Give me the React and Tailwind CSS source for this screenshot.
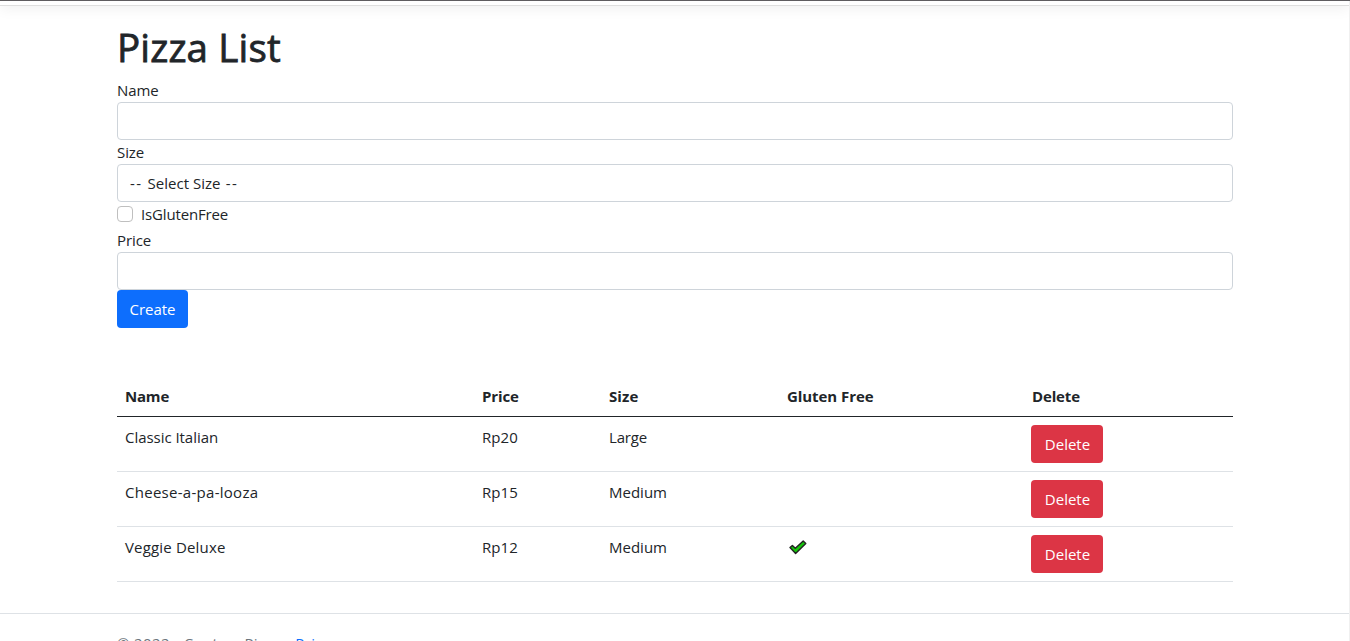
const pizzas = [
  { name: "Classic Italian", price: "Rp20", size: "Large", glutenFree: false, nameTracking: "tracking-[-0.04px]", sizeTracking: "tracking-[-0.15px]" },
  { name: "Cheese-a-pa-looza", price: "Rp15", size: "Medium", glutenFree: false, nameTracking: "tracking-[0.28px]", sizeTracking: "tracking-[0px]" },
  { name: "Veggie Deluxe", price: "Rp12", size: "Medium", glutenFree: true, nameTracking: "tracking-[0.17px]", sizeTracking: "tracking-[0px]" },
];

function CheckMark() {
  return (
    <svg className="ml-[2px] mt-[5px] block" width="18" height="15" viewBox="0 0 18 15">
      <path d="M1 7.6 3.4 5.4 6.3 8.2 14.2 1 16.8 3.4 6.6 13.4Z" fill="#16c60c" stroke="#222" strokeWidth="1.4" strokeLinejoin="round" />
    </svg>
  );
}

function Field({ label, tracking, children }) {
  return (
    <div>
      <div className={"h-6 " + tracking}>{label}</div>
      {children}
    </div>
  );
}

const inputClass = "block h-[38px] w-full rounded-[4px] border border-[#ced4da] bg-white px-3 text-left outline-none";

export default function App() {
  return (
    <div className="flex h-[641px] overflow-hidden bg-white font-['Open_Sans',sans-serif] text-[15px] leading-6 text-[#212529]">
      <div className="min-w-0 flex-1">
        <header className="-mt-[51px] h-[57px] border-b border-[#dfdfdf] bg-white pt-[51px] shadow-[0_4px_12px_rgba(0,0,0,0.05)]">
          <div className="h-[5px] border-t border-[#5f5d60]" />
        </header>
        <main className="ml-[117px] w-[1116px] pt-4">
          <h1 className="mb-2 h-12 text-[38.5px] leading-[50px] font-medium tracking-[0.15px] [-webkit-text-stroke:0.8px_#212529]">Pizza List</h1>
          <form onSubmit={(e) => e.preventDefault()}>
            <Field label="Name" tracking="tracking-[-0.05px]"><input className={inputClass} /></Field>
            <Field label="Size" tracking="tracking-[-0.1px]">
              <button type="button" className={inputClass + " whitespace-pre"}>
                <span className="tracking-[1.3px]">-- </span>
                <span className="tracking-[0.03px]">Select Size</span>
                <span className="tracking-[1.4px]"> --</span>
              </button>
            </Field>
            <label className="flex h-[26px] items-start">
              <input type="checkbox" className="mt-1 size-4 appearance-none rounded-[4px] border border-[#bfbfbf] bg-white" />
              <span className="ml-2 tracking-[-0.15px]">IsGlutenFree</span>
            </label>
            <Field label="Price" tracking="tracking-[-0.1px]"><input className={inputClass} /></Field>
            <button className="block h-[38px] w-[71px] rounded-[4px] bg-[#0d6efd] text-white">Create</button>
          </form>
          <table className="mt-12 w-full table-fixed border-collapse text-left">
            <colgroup>
              <col className="w-[357px]" />
              <col className="w-[127px]" />
              <col className="w-[178px]" />
              <col className="w-[244px]" />
              <col className="w-[210px]" />
            </colgroup>
            <thead>
              <tr className="h-[40px] border-b border-[#212529] align-top [&>th]:px-2 [&>th]:pt-2 [&>th]:pb-0 [&>th]:font-bold">
                <th><span className="tracking-[-0.2px]">Name</span></th>
                <th><span className="tracking-[-0.1px]">Price</span></th>
                <th><span className="tracking-[0.1px]">Size</span></th>
                <th><span className="tracking-[-0.06px]">Gluten Free</span></th>
                <th><span className="ml-px tracking-[-0.15px]">Delete</span></th>
              </tr>
            </thead>
            <tbody>
              {pizzas.map((p) => (
                <tr key={p.name} className="h-[55px] border-b border-[#dee2e6] align-top [&>td]:px-2 [&>td]:pt-2">
                  <td><span className={p.nameTracking}>{p.name}</span></td>
                  <td><span className="tracking-[0.05px]">{p.price}</span></td>
                  <td><span className={p.sizeTracking}>{p.size}</span></td>
                  <td>{p.glutenFree && <CheckMark />}</td>
                  <td><button className="block h-[38px] w-[72px] rounded-[4px] bg-[#dc3545] pl-px text-white">Delete</button></td>
                </tr>
              ))}
            </tbody>
          </table>
        </main>
        <footer className="mt-[31px] border-t border-[#dee2e6] pl-[117px] leading-[59px] text-[#6c757d]">
          <span className="tracking-[0.37px]">© 2022 - ContosoPizza - <a className="text-[#0d6efd] underline">Privacy</a></span>
        </footer>
      </div>
      <div className="w-px border-t border-[#5f5d60] bg-[#f0f0f0]" />
    </div>
  );
}
